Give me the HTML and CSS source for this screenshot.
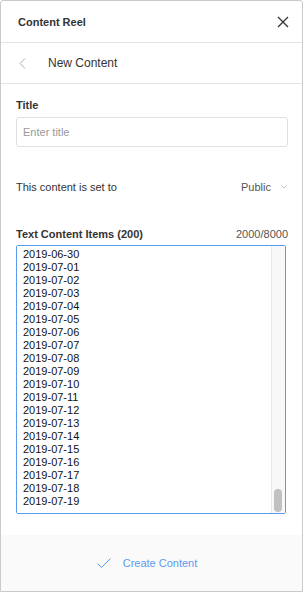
FILE: index.html
```html
<!DOCTYPE html>
<html lang="en">
<head>
    <meta charset="UTF-8">
    <meta name="viewport" content="width=device-width, initial-scale=1.0">
    <link rel="stylesheet" href="styles.css">
</head>
<body>
    <div class="panel">
        <div class="panel-header">
            <h1>Content Reel</h1>
            <button class="close" aria-label="Close">
                <svg width="12" height="12" viewBox="0 0 12 12"><path d="M1 1 L11 11 M11 1 L1 11" stroke="#333" stroke-width="1.3" fill="none"/></svg>
            </button>
        </div>
        <div class="panel-nav">
            <svg class="back" width="7" height="11" viewBox="0 0 7 11"><path d="M6 0.5 L1 5.5 L6 10.5" stroke="#aaa" stroke-width="1" fill="none"/></svg>
            <span>New Content</span>
        </div>
        <div class="panel-body">
            <label for="title" class="field-label">Title</label>
            <input type="text" id="title" placeholder="Enter title">

            <div class="row visibility">
                <span>This content is set to</span>
                <span class="select">Public
                    <svg width="6" height="4" viewBox="0 0 6 4"><path d="M0.5 0.5 L3 3.2 L5.5 0.5" stroke="#bbb" stroke-width="0.9" fill="none"/></svg>
                </span>
            </div>

            <div class="row items-head">
                <span class="field-label">Text Content Items (200)</span>
                <span class="count">2000/8000</span>
            </div>
            <div class="items-box">
                <textarea id="items" spellcheck="false"></textarea>
                <div class="scrollbar"><div class="thumb"></div></div>
            </div>
        </div>
        <div class="panel-footer">
            <svg width="14" height="11" viewBox="0 0 14 11"><path d="M0.5 5.5 L4.5 9.5 L13.5 0.5" stroke="#5a9bf0" stroke-width="1" fill="none"/></svg>
            <span>Create Content</span>
        </div>
    </div>
    <script>
        // 200 items, one per day from 2019-01-01
        let lines = [];
        let d = new Date(Date.UTC(2019, 0, 1));
        for (let i = 0; i < 200; i++) {
            lines.push(d.toISOString().slice(0, 10));
            d.setUTCDate(d.getUTCDate() + 1);
        }
        let ta = document.getElementById("items");
        ta.value = lines.join("\n");
        ta.focus();
        ta.setSelectionRange(ta.value.length, ta.value.length);
        ta.scrollTop = ta.scrollHeight;
    </script>
</body>
</html>
```

FILE: styles.css
```css
* {
    margin: 0;
    padding: 0;
    box-sizing: border-box;
}

body {
    font-family: 'Liberation Sans', Arial, sans-serif;
    background-color: #ffffff;
    color: #333;
}

.panel {
    width: 303px;
    height: 592px;
    border: 1px solid #cacaca;
    border-radius: 3px 3px 0 0;
    display: flex;
    flex-direction: column;
    background-color: #ffffff;
}

.panel-header {
    height: 42px;
    border-bottom: 1px solid #e3e3e3;
    display: flex;
    align-items: center;
    justify-content: space-between;
    padding: 0 13px 0 17px;
}

.panel-header h1 {
    font-size: 11px;
    font-weight: bold;
    color: #333;
}

.close {
    border: none;
    background: none;
    width: 12px;
    height: 12px;
    display: flex;
}

.panel-nav {
    height: 41px;
    border-bottom: 1px solid #e3e3e3;
    display: flex;
    align-items: center;
    padding-left: 18px;
    gap: 22px;
    font-size: 12px;
    color: #333;
}

.panel-body {
    flex: 1;
    padding: 14px 14px 0 15px;
    display: flex;
    flex-direction: column;
}

.field-label {
    display: block;
    font-size: 11px;
    font-weight: bold;
    color: #333;
    line-height: 14px;
}

#title {
    margin-top: 5px;
    height: 30px;
    border: 1px solid #e0e0e0;
    border-radius: 3px;
    padding: 0 6px;
    font-family: inherit;
    font-size: 11px;
    color: #333;
    outline: none;
}

#title::placeholder {
    color: #999;
}

.row {
    display: flex;
    justify-content: space-between;
    align-items: center;
    font-size: 11px;
}

.visibility {
    margin-top: 30px;
    height: 20px;
    color: #333;
}

.select {
    display: flex;
    align-items: center;
    gap: 10px;
    color: #555;
    padding-right: 1px;
}

.items-head {
    margin-top: 30px;
    line-height: 14px;
}

.count {
    color: #555;
}

.items-box {
    margin-top: 4px;
    width: 270px;
    height: 269px;
    border: 1px solid #5a9bf0;
    border-radius: 2px;
    display: flex;
}

#items {
    flex: 1;
    min-width: 0;
    border: none;
    padding: 4px 6px 5px 6px;
    font-family: inherit;
    font-size: 11px;
    line-height: 13px;
    color: #111;
    caret-color: #111;
    resize: none;
    outline: none;
    overflow-y: scroll;
    scrollbar-width: none;
}

#items::-webkit-scrollbar {
    display: none;
}

.scrollbar {
    width: 14px;
    background-color: #f8f8f8;
    border-left: 1px solid #e8e8e8;
    display: flex;
    flex-direction: column;
    justify-content: flex-end;
    padding: 0 3px 1px 2px;
}

.thumb {
    height: 23px;
    background-color: #c1c1c1;
    border-radius: 4px;
}

.panel-footer {
    margin-top: 21px;
    height: 56px;
    background-color: #fafafa;
    display: flex;
    align-items: center;
    justify-content: center;
    gap: 12px;
    padding-right: 9px;
    font-size: 11px;
    color: #5a9bf0;
}
```
